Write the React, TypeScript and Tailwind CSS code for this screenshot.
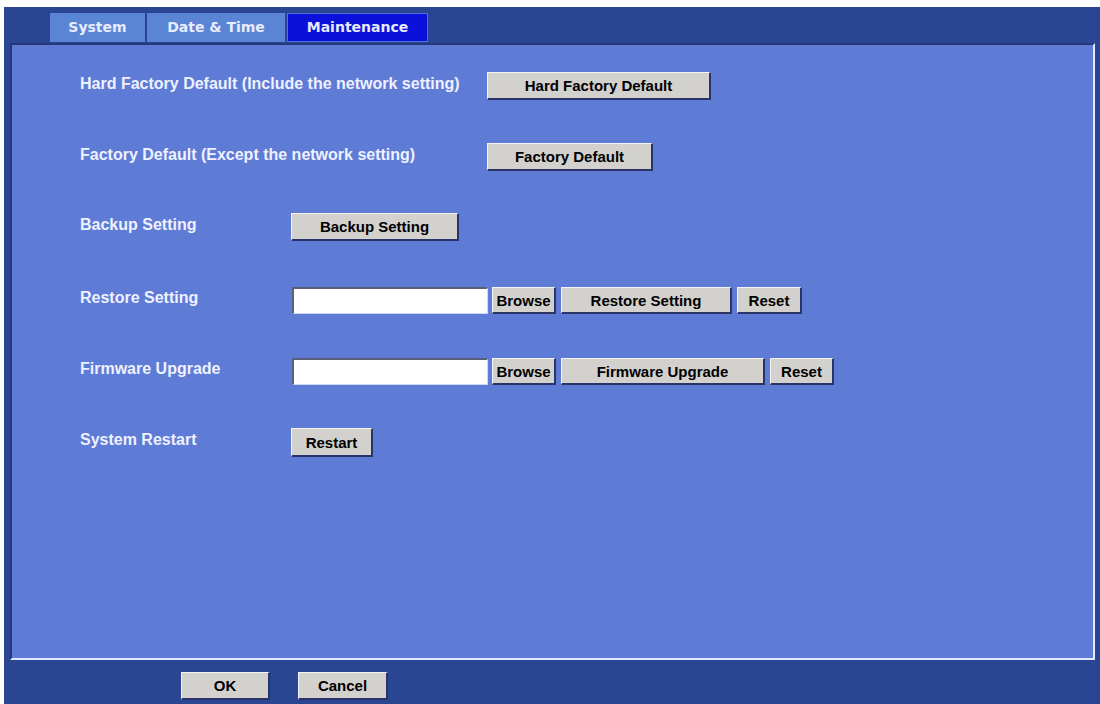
import React from 'react';

const btn =
  'h-full flex items-center justify-center bg-[#d3d1cd] text-black font-bold text-[15px] leading-none border-t border-l border-t-[#f4f4f4] border-l-[#f4f4f4] border-b-2 border-r-2 border-b-[#2a3466] border-r-[#2a3466]';

const field =
  'h-full bg-white border-t-2 border-l-2 border-t-[#5a6078] border-l-[#5a6078] border-b border-r border-b-[#cfd6f0] border-r-[#cfd6f0]';

const Label: React.FC<{ text: string; w: string }> = ({ text, w }) => (
  <div className={`${w} shrink-0 -mt-[5px] text-[16px] leading-[18px] font-bold text-[#eef1ff]`}>{text}</div>
);

const App: React.FC = () => {
  return (
    <div className="w-[1100px] h-[704px] bg-white pt-[7px] pl-[4px] font-['Liberation_Sans',Arial,sans-serif]">
      <div className="h-full bg-[#2a4591] flex flex-col">
        {/* tabs */}
        <div className="flex h-[36px] pt-[6px] pl-[46px] gap-[2px] font-['DejaVu_Sans',Verdana,sans-serif] text-[14px] font-bold">
          <div className="w-[95px] h-[29px] flex items-center justify-center bg-[#5a85d4] text-[#e8ecff]">System</div>
          <div className="w-[138px] h-[29px] flex items-center justify-center bg-[#5a85d4] text-[#e8ecff]">Date &amp; Time</div>
          <div className="w-[141px] h-[29px] flex items-center justify-center bg-[#0b10da] text-[#e6eaff] border border-[#4d6fd8]">
            Maintenance
          </div>
        </div>

        {/* panel */}
        <div className="ml-[6px] mr-[5px] h-[617px] bg-[#5e7bd6] border-t-2 border-l-2 border-t-[#25397a] border-l-[#25397a] border-r-2 border-b-2 border-r-[#e2e8ff] border-b-[#e2e8ff] pt-[27px] pl-[68px] flex flex-col">
          <div className="flex items-center h-[28px]">
            <Label text="Hard Factory Default (Include the network setting)" w="w-[407px]" />
            <button className={`${btn} w-[224px]`}>Hard Factory Default</button>
          </div>

          <div className="flex items-center h-[28px] mt-[43px]">
            <Label text="Factory Default (Except the network setting)" w="w-[407px]" />
            <button className={`${btn} w-[166px]`}>Factory Default</button>
          </div>

          <div className="flex items-center h-[28px] mt-[42px]">
            <Label text="Backup Setting" w="w-[211px]" />
            <button className={`${btn} w-[168px]`}>Backup Setting</button>
          </div>

          <div className="flex items-center h-[27px] mt-[46px]">
            <Label text="Restore Setting" w="w-[212px]" />
            <div className={`${field} w-[196px]`} />
            <button className={`${btn} w-[64px] ml-[4px]`}>Browse</button>
            <button className={`${btn} w-[171px] ml-[5px]`}>Restore Setting</button>
            <button className={`${btn} w-[65px] ml-[5px]`}>Reset</button>
          </div>

          <div className="flex items-center h-[27px] mt-[44px]">
            <Label text="Firmware Upgrade" w="w-[212px]" />
            <div className={`${field} w-[196px]`} />
            <button className={`${btn} w-[64px] ml-[4px]`}>Browse</button>
            <button className={`${btn} w-[204px] ml-[5px]`}>Firmware Upgrade</button>
            <button className={`${btn} w-[64px] ml-[5px]`}>Reset</button>
          </div>

          <div className="flex items-center h-[29px] mt-[43px]">
            <Label text="System Restart" w="w-[211px]" />
            <button className={`${btn} w-[82px]`}>Restart</button>
          </div>
        </div>

        {/* footer */}
        <div className="flex-1 flex items-start pt-[12px] pl-[177px]">
          <button className={`${btn} w-[89px] !h-[28px]`}>OK</button>
          <button className={`${btn} w-[90px] !h-[28px] ml-[28px]`}>Cancel</button>
        </div>
      </div>
    </div>
  );
};

export default App;
